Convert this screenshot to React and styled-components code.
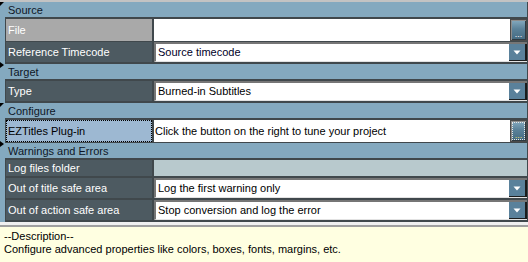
import React from "react";
import styled, { createGlobalStyle, css } from "styled-components";

const GlobalStyle = createGlobalStyle`
  html, body {
    margin: 0;
    padding: 0;
  }
  body {
    background: #f0f0f0;
    font-family: "Liberation Sans", Arial, sans-serif;
    font-size: 11px;
  }
`;

const Page = styled.div`
  width: 528px;
  height: 262px;
  box-sizing: border-box;
  border-top: 2px solid #c3c3c3;
  display: flex;
  flex-direction: column;
  overflow: hidden;
`;

const Grid = styled.div`
  display: flex;
`;

const Gutter = styled.div`
  width: 5px;
  flex: none;
  background: #84a9bf;
`;

const Body = styled.div`
  flex: 1;
  display: flex;
  flex-direction: column;
  border-right: 1px solid #40484c;
`;

const Category = styled.div`
  position: relative;
  height: 15px;
  padding-left: 3px;
  display: flex;
  align-items: center;
  background: #84a9bf;
  border-bottom: 2px solid #40484c;
  color: #0e1626;
  ${(p) =>
    p.$open &&
    css`
      &::before {
        content: "";
        position: absolute;
        left: -5px;
        top: 0;
        border-top: 4px solid #000;
        border-right: 4px solid transparent;
      }
    `}
`;

const Row = styled.div`
  position: relative;
  display: grid;
  grid-template-columns: 146px 1fr;
  column-gap: 2px;
  height: ${(p) => p.$h || 21}px;
  padding: 0 0 2px 1px;
  background: #40484c;
  ${(p) =>
    p.$arrow &&
    css`
      &::after {
        content: "";
        position: absolute;
        left: -5px;
        bottom: -4px;
        z-index: 2;
        border-left: 4px solid #000;
        border-top: 3px solid transparent;
        border-bottom: 3px solid transparent;
      }
    `}
`;

const labelColors = {
  normal: ["#4d5a61", "#ffffff"],
  selected: ["#a9a9a9", "#ffffff"],
  focus: ["#9db8d2", "#000000"],
};

const Label = styled.div`
  display: flex;
  align-items: center;
  padding-left: 2px;
  white-space: nowrap;
  overflow: hidden;
  background: ${(p) => labelColors[p.$state || "normal"][0]};
  color: ${(p) => labelColors[p.$state || "normal"][1]};
  ${(p) =>
    p.$state === "focus" &&
    css`
      outline: 1px dotted #000;
      outline-offset: -1px;
    `}
`;

const TextValue = styled.div`
  display: flex;
  align-items: center;
  background: #fff;
  padding-left: 1px;
  color: #000;
  white-space: nowrap;
`;

const EmptyValue = styled.div`
  background: #b8c9cd;
`;

const Fill = styled.span`
  flex: 1;
  overflow: hidden;
`;

const DotsButton = styled.div`
  width: 15px;
  height: 19px;
  flex: none;
  border: 1px solid #4a4a4a;
  box-shadow: inset 1px 1px 0 #8d8d8d, inset -1px -1px 0 #2e3a42;
  background: linear-gradient(180deg, #86abc0 0%, #5a8199 45%, #44697f 100%);
  display: flex;
  align-items: flex-end;
  justify-content: center;
  color: #fff;
  font-size: 9px;
  line-height: 9px;
  padding-bottom: 1px;
  box-sizing: content-box;
  ${(p) =>
    p.$focus &&
    css`
      outline: 1px dotted #e8e8e8;
      outline-offset: -3px;
      color: #e8e070;
    `}
`;

const Combo = styled.div`
  display: flex;
  align-items: flex-start;
  background: #fff;
  border-top: 2px solid #767676;
  border-left: 2px solid #767676;
  border-bottom: 1px solid #e2e2e2;
`;

const ComboText = styled.span`
  flex: 1;
  padding-left: 2px;
  line-height: 16px;
  color: ${(p) => p.$color || "#000"};
  white-space: nowrap;
  overflow: hidden;
`;

const DropButton = styled.div`
  width: 16px;
  height: 16px;
  flex: none;
  background: #5a819b;
  border-right: 2px solid #1c1c1c;
  border-bottom: 1px solid #1c1c1c;
  display: flex;
  align-items: center;
  justify-content: center;
`;

const Description = styled.div`
  flex: 1;
  margin-top: 3px;
  border-top: 2px solid #a0a0a0;
  background: #ffffe1;
  padding: 3px 4px 0;
  line-height: 13px;
  color: #000;
`;

const DropArrow = () => (
  <svg width="8" height="5" viewBox="0 0 8 5">
    <polygon points="0.5,0.5 7.5,0.5 4,4.5" fill="#fff" />
  </svg>
);

const ComboValue = ({ children, color }) => (
  <Combo>
    <ComboText $color={color}>{children}</ComboText>
    <DropButton>
      <DropArrow />
    </DropButton>
  </Combo>
);

export default function App() {
  return (
    <>
      <GlobalStyle />
      <Page>
        <Grid>
          <Gutter />
          <Body>
            <Category $open>Source</Category>
            <Row>
              <Label $state="selected">File</Label>
              <TextValue>
                <Fill />
                <DotsButton>...</DotsButton>
              </TextValue>
            </Row>
            <Row $h={20} $arrow>
              <Label>Reference Timecode</Label>
              <ComboValue color="#000028">Source timecode</ComboValue>
            </Row>

            <Category>Target</Category>
            <Row $h={20}>
              <Label>Type</Label>
              <ComboValue>Burned-in Subtitles</ComboValue>
            </Row>

            <Category $open>Configure</Category>
            <Row $arrow>
              <Label $state="focus">EZTitles Plug-in</Label>
              <TextValue>
                <Fill>Click the button on the right to tune your project</Fill>
                <DotsButton $focus>...</DotsButton>
              </TextValue>
            </Row>

            <Category>Warnings and Errors</Category>
            <Row $h={16}>
              <Label>Log files folder</Label>
              <EmptyValue />
            </Row>
            <Row $h={20}>
              <Label>Out of title safe area</Label>
              <ComboValue>Log the first warning only</ComboValue>
            </Row>
            <Row $h={20}>
              <Label>Out of action safe area</Label>
              <ComboValue>Stop conversion and log the error</ComboValue>
            </Row>
          </Body>
        </Grid>
        <Description>
          <div>--Description--</div>
          <div>Configure advanced properties like colors, boxes, fonts, margins, etc.</div>
        </Description>
      </Page>
    </>
  );
}
